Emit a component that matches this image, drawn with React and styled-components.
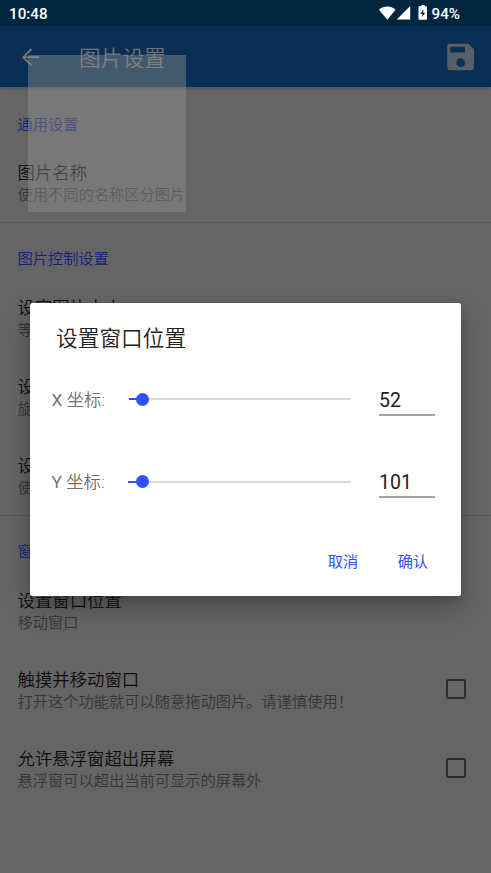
import React from "react";
import styled, { createGlobalStyle } from "styled-components";

const GlobalStyle = createGlobalStyle`
  * { box-sizing: border-box; }
  body {
    margin: 0;
    background: #656565;
    font-family: Roboto, "Noto Sans CJK SC", sans-serif;
    overflow: hidden;
  }
`;

const Screen = styled.div`
  position: relative;
  width: 491px;
  height: 873px;
  overflow: hidden;
  background: #656565;
`;

const StatusBar = styled.header`
  height: 26px;
  padding: 2px 31px 0 9px;
  display: flex;
  align-items: center;
  background: #00253f;
  color: #fff;
  font-size: 15.2px;
  font-weight: 500;
`;

const Clock = styled.span`
  flex: 1;
`;

const StatusIcons = styled.svg`
  width: 50px;
  height: 18px;
  margin-right: 3px;
`;

const Battery = styled.span`
  font-size: 15.2px;
`;

const AppBar = styled.div`
  height: 61px;
  padding: 0 15px 0 20px;
  display: flex;
  align-items: center;
  background: #0a2f54;
  box-shadow: 0 1px 3px rgba(0, 0, 0, 0.25);
`;

const BackIcon = styled.svg`
  width: 20px;
  height: 20px;
`;

const SaveIcon = styled.svg`
  width: 30px;
  height: 30px;
`;

const AppTitle = styled.h1`
  flex: 1;
  margin: 0 0 0 39px;
  padding-top: 4px;
  font-size: 21.7px;
  line-height: 30px;
  font-weight: 350;
  color: #737271;
`;

const Section = styled.section`
  height: ${(p) => p.$height}px;
  padding-top: ${(p) => p.$inset || 0}px;
  border-bottom: ${(p) => (p.$last ? "none" : "1px solid #575757")};
`;

const SectionTitle = styled.h2`
  height: 56px;
  margin: 0;
  padding: ${(p) => p.$top}px 17.5px 0;
  font-size: 15.22px;
  line-height: 22px;
  font-weight: 350;
  color: #142078;
`;

const Row = styled.div`
  height: 79px;
  padding: 17px 25px 0 17.5px;
  display: flex;
  justify-content: space-between;
`;

const RowTitle = styled.div`
  font-size: 17.4px;
  line-height: 24px;
  font-weight: 350;
  color: #0d0d0d;
`;

const RowSummary = styled.div`
  font-size: 15.25px;
  line-height: 20px;
  font-weight: 350;
  color: #363636;
`;

const CheckBox = styled.span`
  width: 20px;
  height: 20px;
  margin-top: 11px;
  border: 2px solid #2b2b2b;
  border-radius: 2.5px;
`;

const FloatingPicture = styled.div`
  position: absolute;
  left: 28px;
  top: 55px;
  width: 157.5px;
  height: 157px;
  background: rgba(148, 148, 148, 0.42);
`;

const Dialog = styled.div`
  position: absolute;
  left: 29.5px;
  top: 303px;
  width: 431.5px;
  height: 293px;
  border-radius: 2.5px;
  background: #fff;
  box-shadow: 0 12px 26px rgba(0, 0, 0, 0.26), 0 3px 8px rgba(0, 0, 0, 0.12);
`;

const DialogTitle = styled.h2`
  margin: 0;
  padding: 21px 26.5px 0;
  height: 55px;
  font-size: 21.7px;
  line-height: 30px;
  font-weight: 350;
  color: #212121;
`;

const Field = styled.div`
  height: 82.5px;
  padding: 0 26px 0 22px;
  display: flex;
  align-items: center;
`;

const Label = styled.label`
  width: ${(p) => p.$width}px;
  padding-bottom: 2px;
  font-size: 17.4px;
  font-weight: 350;
  color: #707070;
`;

const Axis = styled.span`
  font-weight: 400;
  color: #757575;
`;

const Track = styled.div`
  flex: 1;
  height: 2px;
  display: flex;
  align-items: center;
  background: #dadada;
`;

const Filled = styled.div`
  height: 2px;
  background: #304ffe;
`;

const Thumb = styled.div`
  width: 13px;
  height: 13px;
  margin-left: -5px;
  border-radius: 50%;
  background: #304ffe;
`;

const NumberBox = styled.div`
  width: 56px;
  height: 33px;
  margin-left: 28px;
  padding-top: 5px;
  border-bottom: 2px solid #a3a3a3;
  font-size: 19.5px;
  line-height: 25px;
  color: #212121;
`;

const Actions = styled.div`
  display: flex;
  justify-content: flex-end;
  gap: 39.5px;
  margin-top: 28px;
  padding: 0 33px;
`;

const Action = styled.button`
  border: 0;
  padding: 0;
  background: none;
  font: inherit;
  font-size: 15.2px;
  line-height: 22px;
  color: #304ffe;
`;

const sections = [
  {
    title: "通用设置",
    height: 136,
    inset: 1,
    titleTop: 25.5,
    rows: [{ title: "图片名称", summary: "使用不同的名称区分图片" }],
  },
  {
    title: "图片控制设置",
    height: 293,
    titleTop: 25,
    rows: [
      { title: "设定图片大小", summary: "等比" },
      { title: "设置", summary: "旋转" },
      { title: "设置", summary: "使用" },
    ],
  },
  {
    title: "窗口设置",
    height: 293,
    titleTop: 25,
    rows: [
      { title: "设置窗口位置", summary: "移动窗口" },
      {
        title: "触摸并移动窗口",
        summary: "打开这个功能就可以随意拖动图片。请谨慎使用！",
        check: true,
      },
      {
        title: "允许悬浮窗超出屏幕",
        summary: "悬浮窗可以超出当前可显示的屏幕外",
        check: true,
      },
    ],
  },
];

const fields = [
  { axis: "X", value: 52, width: 77.5, filled: 11.5 },
  { axis: "Y", value: 101, width: 76.5, filled: 12.5 },
];

export default function App() {
  return (
    <Screen>
      <GlobalStyle />
      <StatusBar>
        <Clock>10:48</Clock>
        <StatusIcons viewBox="0 0 50 18" fill="#fff">
          <path d="M0 4.7C5 0.400 11.500 0.400 16.500 4.700L8.300 14.700Z" />
          <path d="M31.2 1V14.500H17.700Z" />
          <path
            fillRule="evenodd"
            d="M42.3 0H45.700V1.200H47.200Q48 1.200 48 2V14Q48 14.800 47.200 14.800H40.300Q39.500 14.800 39.500 14V2Q39.500 1.200 40.300 1.200H42.300ZM44.300 4.500L41.300 9H43.300V12L46.200 7.700H44.300Z"
          />
        </StatusIcons>
        <Battery>94%</Battery>
      </StatusBar>
      <AppBar>
        <BackIcon viewBox="0 0 20 20" fill="none" stroke="#777879" strokeWidth="1.8">
          <path d="M19 10.2H3.200M11.500 2L3.200 10.200L11.500 18.400" />
        </BackIcon>
        <AppTitle>图片设置</AppTitle>
        <SaveIcon viewBox="0 0 30 30" fill="#575f67">
          <path
            fillRule="evenodd"
            d="M4 1.800H22.500L28 7.300V25.300Q28 28.200 25 28.200H4.200Q1.300 28.200 1.300 25.300V4.800Q1.300 1.800 4 1.800ZM4.300 4.800V10.600H19V4.800ZM14.700 16.300A4.400 4.400 0 1 0 14.700 25.100A4.400 4.400 0 1 0 14.700 16.300Z"
          />
        </SaveIcon>
      </AppBar>
      {sections.map((section, i) => (
        <Section
          key={section.title}
          $height={section.height}
          $inset={section.inset}
          $last={i === sections.length - 1}
        >
          <SectionTitle $top={section.titleTop}>{section.title}</SectionTitle>
          {section.rows.map((row, j) => (
            <Row key={j}>
              <div>
                <RowTitle>{row.title}</RowTitle>
                <RowSummary>{row.summary}</RowSummary>
              </div>
              {row.check && <CheckBox />}
            </Row>
          ))}
        </Section>
      ))}
      <FloatingPicture />
      <Dialog>
        <DialogTitle>设置窗口位置</DialogTitle>
        {fields.map((f) => (
          <Field key={f.axis}>
            <Label $width={f.width}>
              <Axis>{f.axis}</Axis> 坐标:
            </Label>
            <Track>
              <Filled style={{ width: f.filled }} />
              <Thumb />
            </Track>
            <NumberBox>{f.value}</NumberBox>
          </Field>
        ))}
        <Actions>
          <Action>取消</Action>
          <Action>确认</Action>
        </Actions>
      </Dialog>
    </Screen>
  );
}
